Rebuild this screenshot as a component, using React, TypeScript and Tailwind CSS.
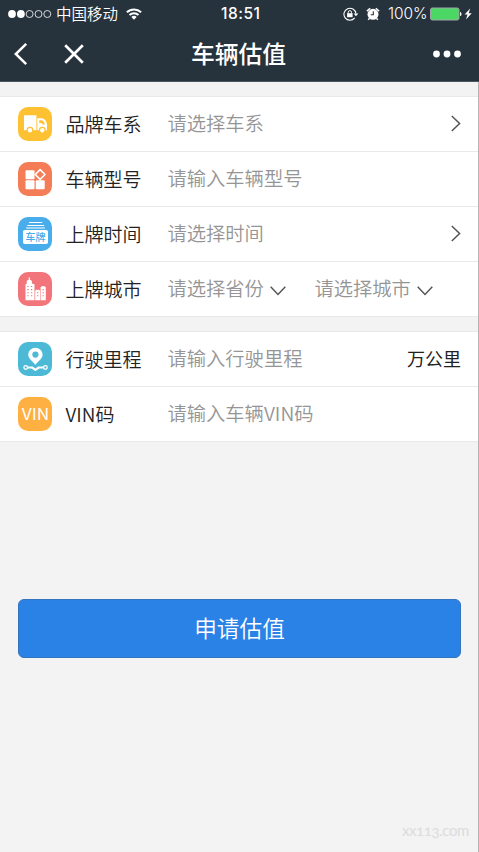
import * as React from "react";
import { clsx } from "clsx";

interface TileProps {
  className: string;
  children: React.ReactNode;
}

function Tile({ className, children }: TileProps) {
  return (
    <div className={clsx("h-[34px] w-[34px] shrink-0 overflow-hidden rounded-[10px]", className)}>
      <svg viewBox="0 0 34 34" className="block h-[34px] w-[34px]">
        {children}
      </svg>
    </div>
  );
}

function TruckTile() {
  return (
    <Tile className="bg-[#fec132]">
      <path d="M6 8.3h12.4v15H6z" fill="#fff" />
      <path d="M19.3 11.3h4.500c2.700 0 5.200 3.700 5.200 6.700v5.300h-9.700z" fill="#fff" />
      <path d="M21.2 13.2h2.300c1.500 0 3 2.200 3.400 4.200h-2l-1.400-1.400h-2.300z" fill="#fec132" />
      <circle cx="12" cy="23.2" r="2.8" fill="#fff" stroke="#fec132" strokeWidth="1.2" />
      <circle cx="24.300" cy="23.2" r="2.8" fill="#fff" stroke="#fec132" strokeWidth="1.2" />
    </Tile>
  );
}

function ModelTile() {
  return (
    <Tile className="bg-[#f47c57]">
      <rect x="7.5" y="8.3" width="9" height="9" rx="1" fill="#fff" />
      <rect x="7.5" y="18.3" width="9" height="9" rx="1" fill="#fff" />
      <rect x="17.7" y="18.3" width="9" height="9" rx="1" fill="#fff" />
      <path d="M22.1 7.600l4.900 4.900-4.900 4.900-4.900-4.900z" fill="none" stroke="#fff" strokeWidth="1.6" strokeLinejoin="round" />
    </Tile>
  );
}

function PlateTile() {
  return (
    <Tile className="bg-[#48adea]">
      <path d="M11.5 5.5h12.3M9.7 8.5h16M8.500 11h18" stroke="#fff" strokeWidth="1.2" strokeLinecap="round" />
      <rect x="5" y="13" width="25" height="14" rx="1.8" fill="#fff" />
      <text x="17.5" y="23.8" textAnchor="middle" fontSize="10" fontWeight="500" fill="#48adea">
        车牌
      </text>
    </Tile>
  );
}

function CityTile() {
  return (
    <Tile className="bg-[#f1757a]">
      <path d="M7.500 28.200V12.300l1.300-.9V8.800l1.900-1.100V5.500h1.200v2.200l2 1.100v2.600l2.600.9v15.900z" fill="#fff" />
      <path d="M17.200 28.200v-9.500l1.100-1h2.700l1.100 1v9.500zM22.600 28.200V15.300l1.200-1h2.800l1.200 1v12.900z" fill="#fff" />
      <path
        d="M9.300 14.500h1.300M12.900 14.500h1.300M9.300 17.600h1.300M12.900 17.600h1.300M9.300 20.700h1.300M12.900 20.700h1.300M9.300 23.800h1.300M12.900 23.800h1.300M19 20.700h1.300M19 23.800h1.300M24.500 17.600h1.300M24.500 20.700h1.300M24.500 23.800h1.300"
        stroke="#f1757a"
        strokeWidth="1.1"
      />
    </Tile>
  );
}

function MileageTile() {
  return (
    <Tile className="bg-[#4cbad6]">
      <path
        d="M17.4 23c-1.100-2.400-7.200-6-7.200-10.300a7.200 7 0 0 1 14.400 0c0 4.300-6.100 7.900-7.200 10.300z"
        fill="#fff"
      />
      <circle cx="17.4" cy="12.6" r="3.1" fill="#4cbad6" />
      <path d="M9 25.5h5l3.400 2.300 3.400-2.300h5" fill="none" stroke="#fff" strokeWidth="2.2" strokeLinejoin="round" />
      <circle cx="7.7" cy="25.5" r="1.8" fill="#4cbad6" stroke="#fff" strokeWidth="1.3" />
      <circle cx="27.4" cy="25.5" r="1.8" fill="#4cbad6" stroke="#fff" strokeWidth="1.3" />
    </Tile>
  );
}

function VinTile() {
  return (
    <Tile className="bg-[#ffb043]">
      <text x="17.5" y="23.2" textAnchor="middle" fontSize="16.5" textLength="27.5" lengthAdjust="spacingAndGlyphs" fill="#fff">
        VIN
      </text>
    </Tile>
  );
}

function ChevronRight() {
  return (
    <svg viewBox="0 0 10 17" className="h-[17px] w-[10px]" fill="none" stroke="#555" strokeWidth="1.5">
      <path d="M.8 1l7.800 7.500L.8 16" />
    </svg>
  );
}

function ChevronDown() {
  return (
    <svg viewBox="0 0 16 10" className="mt-[5px] h-[10px] w-[16px]" fill="none" stroke="#555" strokeWidth="1.5">
      <path d="M.7 .8L8 8.500 15.300 .8" />
    </svg>
  );
}

interface RowProps {
  icon: React.ReactNode;
  label: string;
  last?: boolean;
  children: React.ReactNode;
}

function Row({ icon, label, last = false, children }: RowProps) {
  return (
    <div
      className={clsx(
        "flex items-center pr-[17px] pl-[18px]",
        last ? "h-[54px]" : "h-[55px] border-b border-[#e9e9e9]",
      )}
    >
      {icon}
      <span className="mb-[2px] ml-[13.5px] w-[102px] text-[19px] leading-[19px] font-[350] whitespace-nowrap text-[#222]">
        {label}
      </span>
      <div className="mb-px flex flex-1 items-center justify-between text-[19.3px] leading-[19px] font-[350] whitespace-nowrap text-[#959595]">
        {children}
      </div>
    </div>
  );
}

function StatusBar() {
  return (
    <div className="flex h-[27px] items-center text-[16px] leading-none text-white">
      <svg viewBox="0 0 44 10" className="ml-2 h-[10px] w-[44px]" fill="#fff">
        <circle cx="4" cy="5" r="3.9" />
        <circle cx="12.9" cy="5" r="3.9" />
        <g fill="none" stroke="#fff" strokeWidth=".8">
          <circle cx="21.6" cy="5" r="3.5" />
          <circle cx="30.5" cy="5" r="3.5" />
          <circle cx="39.3" cy="5" r="3.5" />
        </g>
      </svg>
      <span className="ml-[4px] w-[62px] text-[15.5px] font-[350] whitespace-nowrap">中国移动</span>
      <svg viewBox="0 0 16 12" className="ml-[8px] h-[12px] w-[16px]" fill="none" stroke="#fff" strokeWidth="2">
        <path d="M.9 4.300a10.300 10.300 0 0 1 14.200 0M3.500 7a6.500 6.500 0 0 1 9 0" />
        <path d="M8 11.700L5.300 9a4 4 0 0 1 5.400 0z" fill="#fff" stroke="none" />
      </svg>
      <span className="ml-[79px] w-[41px] font-['Inter'] text-[15.5px] font-medium tracking-[0.5px] whitespace-nowrap">
        18:51
      </span>
      <svg viewBox="0 0 16 14" className="ml-[81px] h-[14px] w-[16px]" fill="none" stroke="#fff">
        <path d="M11.700 10.900A6 6 0 1 1 12.900 6.500" strokeWidth="1.1" />
        <path d="M10.600 6.400h4.800L13 9.200z" fill="#fff" stroke="none" />
        <rect x="4.100" y="6.200" width="5.500" height="4" fill="#fff" stroke="none" />
        <path d="M5.200 6.500V5.300a1.650 1.650 0 0 1 3.300 0v1.200" strokeWidth="1" />
      </svg>
      <svg viewBox="0 0 14 14" className="ml-[7px] h-[14px] w-[14px]" fill="#fff">
        <circle cx="7" cy="7.300" r="5.500" />
        <path
          d="M.9 4.100L4.200 1.200M13.100 4.100L9.800 1.200M3.300 11.500L2.200 12.800M10.700 11.500l1.100 1.300"
          stroke="#fff"
          strokeWidth="1.5"
        />
        <path d="M7.300 4.300v3.500H4.700" fill="none" stroke="#26323c" strokeWidth="1.1" />
      </svg>
      <span className="ml-[8px] w-[39px] font-['Inter'] text-[15.5px] font-light tracking-[-0.1px] whitespace-nowrap">
        100%
      </span>
      <svg viewBox="0 0 44 14" className="ml-[3px] h-[14px] w-[44px]">
        <rect x=".5" y="1" width="28.5" height="12" rx="1.8" fill="#4bd763" stroke="#a0a5a8" />
        <path d="M30 5c2 .3 2 4 0 4z" fill="#fff" />
        <path d="M40.200 1.500l-5.600 6h2.900l-1.500 5 5.700-6.300h-3z" fill="#fff" />
      </svg>
    </div>
  );
}

function NavBar() {
  return (
    <div className="grid h-[54px] grid-cols-[1fr_auto_1fr] items-center text-white">
      <div className="flex items-center">
        <svg viewBox="0 0 14 24" className="ml-[14px] h-[24px] w-[14px]" fill="none" stroke="#fff" strokeWidth="2.5">
          <path d="M12.200 1.800L1.800 12l10.400 10.200" />
        </svg>
        <svg viewBox="0 0 20 20" className="ml-[36px] h-[20px] w-[20px]" fill="none" stroke="#fff" strokeWidth="2.7">
          <path d="M1.200 1.200l17.600 17.600M18.800 1.200L1.200 18.800" />
        </svg>
      </div>
      <h1 className="mr-[2px] mb-[2px] text-[23.8px] leading-none font-medium">车辆估值</h1>
      <svg viewBox="0 0 28 8" className="mr-[18px] h-[8px] w-[28px] justify-self-end" fill="#fff">
        <circle cx="3.500" cy="4" r="3.4" />
        <circle cx="14" cy="4" r="3.4" />
        <circle cx="24.500" cy="4" r="3.4" />
      </svg>
    </div>
  );
}

export default function App() {
  return (
    <div className="flex h-[852px] w-[479px] flex-col overflow-hidden bg-[#f3f3f3] font-['Noto_Sans_CJK_SC',sans-serif]">
      <header className="h-[82px] shrink-0 border-b border-[#4a555d] bg-[#26323c]">
        <StatusBar />
        <NavBar />
      </header>

      <main className="flex flex-1 flex-col border-r border-[#b5b5b5] pt-[14px]">
        <section className="border-y border-[#e9e9e9] bg-white">
          <Row icon={<TruckTile />} label="品牌车系">
            <span>请选择车系</span>
            <ChevronRight />
          </Row>
          <Row icon={<ModelTile />} label="车辆型号">
            <span>请输入车辆型号</span>
          </Row>
          <Row icon={<PlateTile />} label="上牌时间">
            <span>请选择时间</span>
            <ChevronRight />
          </Row>
          <Row icon={<CityTile />} label="上牌城市" last>
            <div className="flex flex-1 items-center">
              <div className="flex w-[147px] items-center gap-[6px]">
                <span>请选择省份</span>
                <ChevronDown />
              </div>
              <div className="flex items-center gap-[6px]">
                <span>请选择城市</span>
                <ChevronDown />
              </div>
            </div>
          </Row>
        </section>

        <section className="mt-[14px] border-y border-[#e9e9e9] bg-white">
          <Row icon={<MileageTile />} label="行驶里程">
            <span>请输入行驶里程</span>
            <span className="text-[18px] font-normal text-[#222]">万公里</span>
          </Row>
          <Row icon={<VinTile />} label="VIN码" last>
            <span>请输入车辆VIN码</span>
          </Row>
        </section>

        <button className="mr-[17px] ml-[18px] mt-[157px] h-[59px] rounded-[6px] border border-[#3274bd] bg-[#2b82e6] text-[22.7px] leading-none font-[350] text-white">
          申请估值
        </button>

        <footer className="mt-auto mr-[9px] mb-[13px] text-right font-['Lato'] text-[15px] leading-[18px] tracking-[-0.4px] text-[#dcdcdc] oldstyle-nums">
          xx113.com
        </footer>
      </main>
    </div>
  );
}
